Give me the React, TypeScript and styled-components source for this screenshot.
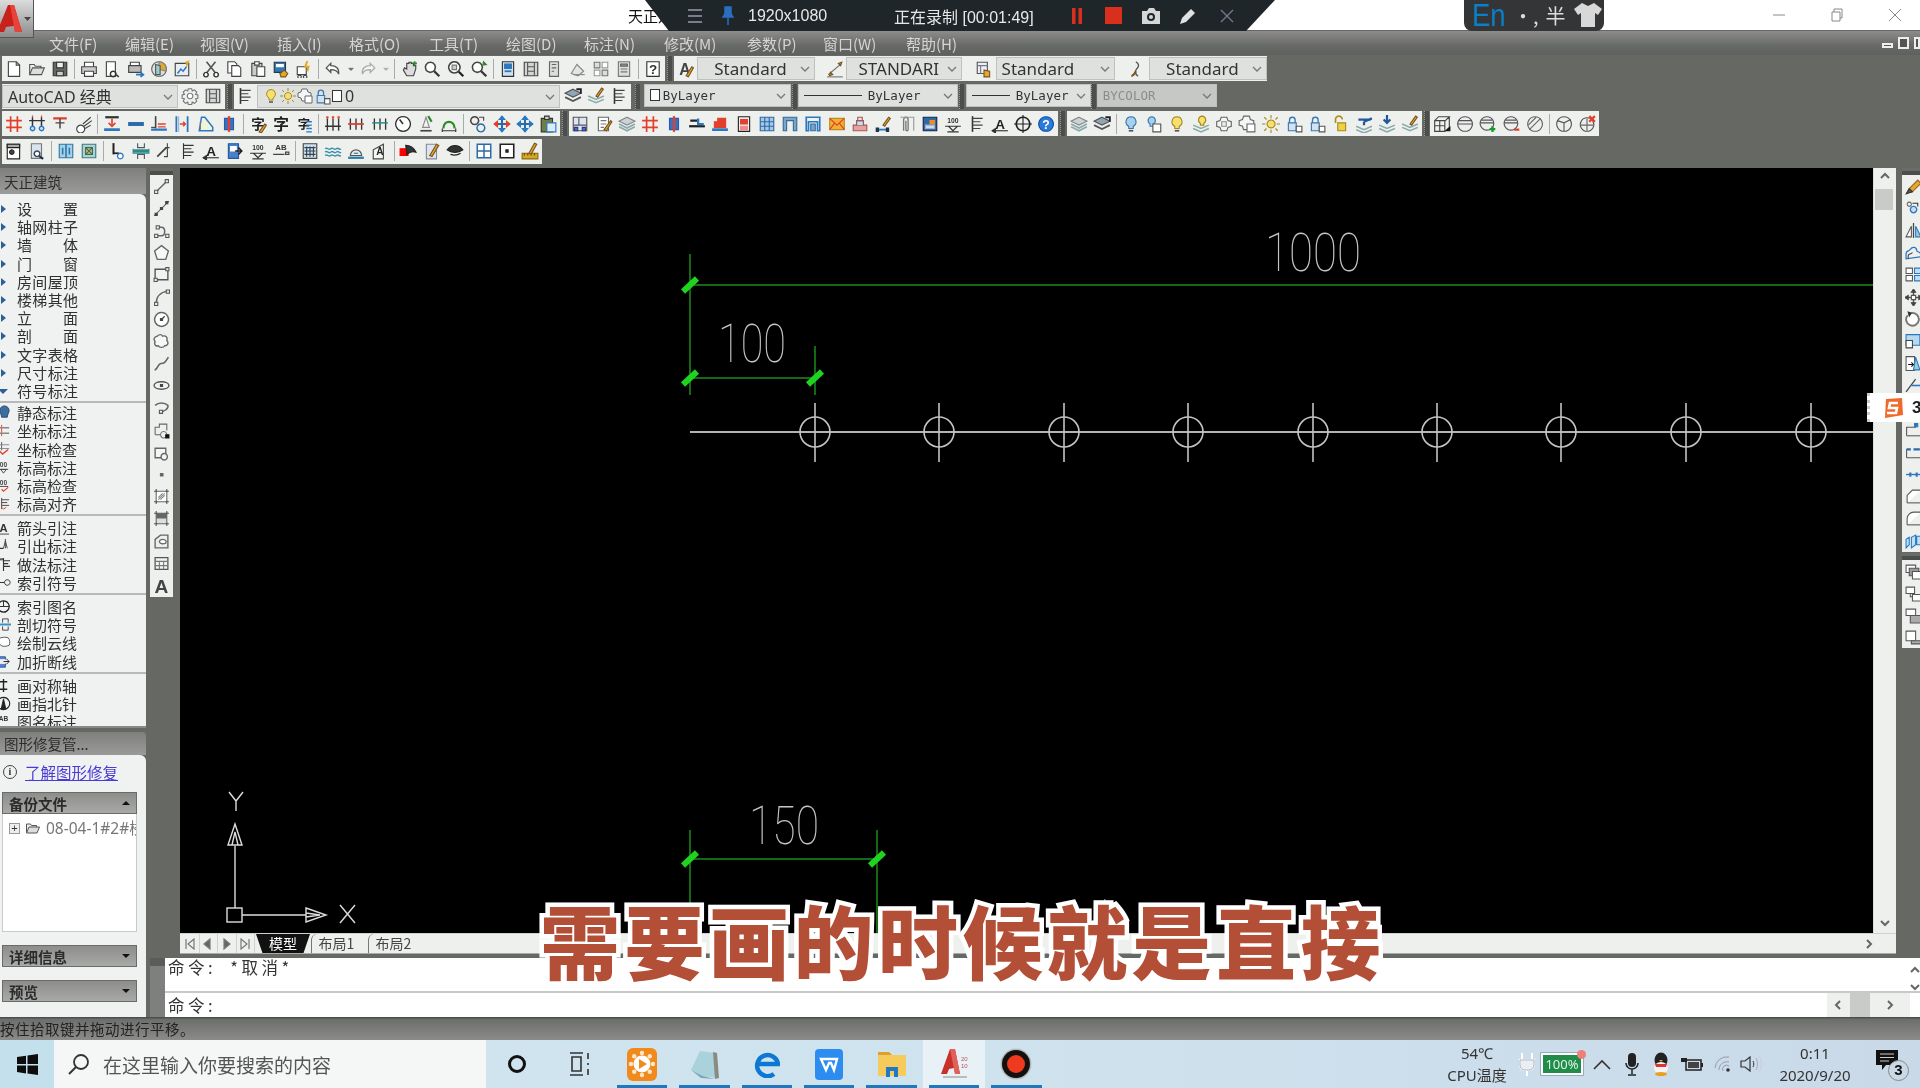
import React from "react";
import styled, { createGlobalStyle } from "styled-components";

const CJK = `"Noto Sans CJK SC", "Noto Sans", sans-serif`;

const Global = createGlobalStyle`
  html, body { margin: 0; padding: 0; background: #666864; }
  * { box-sizing: border-box; }
`;

/* ---------- icon data: [path, stroke, fill, width] or ["T:glyph", colour, size] ---------- */
type P = [string, string?, string?, number?];
const K = "#444";
const B = "#2b78c0";
const R = "#e2402c";
const Y = "#e0aa2c";
const GL: Record<string, P[]> = {
  new: [["M3 1.5h7l3 3v10H3z", K, "#fff"], ["M10 1.5v3h3", K]],
  open: [["M1.5 13V4h4l1 1.5h5V7", "#555", "#eee"], ["M1.5 13l2.5-6h10.5l-2.5 6z", "#555", "#ddd"]],
  save: [["M2 2h12v12H2z", "#333", "#666"], ["M5 2h6v5H5z", "#333", "#eee"], ["M5 10h6v4H5z", "#333", "#ccc"]],
  print: [["M4 6V2h8v4", K, "#fff"], ["M1.5 6h13v6h-13z", K, "#ccc"], ["M4 10h8v4.5H4z", K, "#fff"]],
  prev: [["M3 1.5h8v13H3z", K, "#fff"], ["M9 10a2.5 2.5 0 1 0 .1 0zM11 12.5l3 2.5", "#333", "none", 1.3]],
  plot: [["M3 5V2h8v3", K, "#fff"], ["M1.5 5h11v6h-11z", K, "#bbb"], ["M8 13h6M12 11l2.5 2-2.5 2", B, "none", 1.6]],
  pub: [["M8 1.5a6.5 6.5 0 1 0 .1 0z", "#666", "#ddd"], ["M8 1.5a6.5 6.5 0 0 1 6 8.5L8 8z", "#888", Y], ["M5 4l4 1v8H5z", "#555", "#9cc"]],
  sheet: [["M2 3h12v11H2z", K, "#e8eef4"], ["M4 12l3-4 2 2 3-4", B, "none", 1.3], ["M11 2l3-1-2 5", Y, Y]],
  cut: [["M4 1.5l8 10M12 1.5l-8 10", "#555", "none", 1.4], ["M3.5 11a2 2 0 1 0 .1 0zM12.5 11a2 2 0 1 0 .1 0z", "#333", "#fff", 1.3]],
  copy: [["M2.5 1.5h6l2 2v8h-8z", K, "#fff"], ["M6 5h6l2 2v7.5H6z", K, "#fff"]],
  paste: [["M2.5 3h9v11h-9z", K, "#ccc"], ["M5 1.5h4v3H5z", K, "#fff"], ["M7 6h7v8.5H7z", K, "#fff"]],
  match: [["M2 2h10v9H2z", "#333", B], ["M4 4h6v2H4z", "#fff", "#fff"], ["M7 12l4-3 3 3-2 3H8z", "#7a5320", Y]],
  blk: [["M2 6h8v7H2z", K, "#fff"], ["M4 13.5a1.5 1.5 0 1 0 .1 0zM9 13.5a1.5 1.5 0 1 0 .1 0z", K], ["M11 1l-2 5h3l-1 4", Y, "none", 1.8]],
  undo: [["M6 3L2 7l4 4V8.5c4 0 6 1 7 4 .5-5-2-7.5-7-7.5z", "#555", "#fff", 1.2]],
  redo: [["M10 3l4 4-4 4V8.5c-4 0-6 1-7 4-.5-5 2-7.5 7-7.5z", "#aaa", "#f5f5f5", 1.2]],
  drop: [["M5 7h6l-3 3z", "#666", "#666"]],
  dropl: [["M5 7h6l-3 3z", "#aaa", "#aaa"]],
  pan: [["M3 9l3 5h6l2-6V5h-2V3h-2V2H8v1H6v5L4 7z", K, "#ddd"], ["M11 3h4M13 1v4", "#2a8a2a", "none", 1.4]],
  zoom: [["M6.5 2a4.5 4.5 0 1 0 .1 0z", K, "#fff", 1.4], ["M10 10l4.5 4.5", "#333", "none", 2]],
  zoomw: [["M6.5 1.5a5 5 0 1 0 .1 0z", K, "#fff", 1.4], ["M4.5 4.5h4v4h-4z", "#777", "#ccc"], ["M10.5 10.5l4 4", "#222", "none", 2]],
  zoomp: [["M6.5 2a4.5 4.5 0 1 0 .1 0z", K, "#fff", 1.4], ["M10 10l4.5 4.5", "#333", "none", 2], ["M12 1.5l2.5 2.5-3 .5z", "#2a8a2a", "#2a8a2a"]],
  props: [["M3 1.5h10v13H3z", "#333", "#cfe0ee"], ["M5 3.5h6v4H5z", B, B], ["M5 10h6", B, "none", 1.6]],
  dc: [["M2 2h12v12H2z", "#444", "#d5d5d5"], ["M5 2v12M11 2v12M5 6h6M5 10h6", "#555"]],
  tool: [["M4 1.5h8v13H4z", "#666", "#ddd"], ["M6 4h4M6 7h4M6 10h2", "#666"]],
  sheetm: [["M2 12l5-8 6 6-5 4z", "#888", "#e5e5e5"], ["M4 13h10", "#888"]],
  mark: [["M2 2h5v5H2zM9 9h5v5H9z", "#777", "#ddd"], ["M9 2h5v5H9zM2 9h5v5H2z", "#999", "#fff"]],
  calc: [["M3 1.5h10v13H3z", "#777", "#ddd"], ["M5 3.5h6v2H5z", "#666", "#888"], ["M5 8h6M5 10.5h6", "#777"]],
  help: [["M2.5 1.5h11v13h-11z", "#333", "#fff"], ["T:?", "#333", "12"]],
  txt: [["T:A", "#444", "14"], ["M9 14l5-8 1.5 1-4.5 8z", "#7a5320", Y]],
  dim: [["M2 13L14 3", "#666"], ["M3 14l3-1-2-2zM14 2l-1 3-2-2z", "#7a5320", Y], ["M1 15h14", "#777"]],
  tbl: [["M2 2h9v10H2z", "#555", "#eef"], ["M2 5h9M5 5v7", "#777"], ["M8 9l5 1v5H8z", "#7a5320", Y]],
  mls: [["M7 1.5c3 2 3 4 1 6-2 2-2 5 1 7", "#555", "#eee", 1.2], ["M3 14c2 0 3-2 4-4", "#7a5320", "none", 2]],
  gear: [["M6.5 1.500h3l.5 2 2-1 2 2-1 2 2 .5v3l-2 .5 1 2-2 2-2-1-.5 2h-3l-.5-2-2 1-2-2 1-2-2-.5v-3l2-.5-1-2 2-2 2 1z", "#777", "#eee"], ["M8 5.500a2.500 2.500 0 1 0 .1 0z", "#777", "#fff"]],
  /* tianzheng row */
  hash: [["M5 1v14M11 1v14M1 5h14M1 11h14", R, "none", 1.5]],
  colg: [["M4 2v8M12 2v8M1 5h14", "#333", "none", 1.3], ["M4 2V.5M12 2V.5", R], ["M4 10a2 2 0 1 0 .1 0zM12 10a2 2 0 1 0 .1 0z", B, "#cde", 1.2]],
  tee: [["M2 3h12", R, "none", 2], ["M8 3v9M4 7h8", "#444", "none", 1.3]],
  tag: [["M5 9a3.5 3.5 0 1 0 .1 0z", K, "#fff"], ["M7 8l7-6M8 10l7-5M9 12l5-3", K]],
  dim1: [["M2 2h12", "#333", "none", 2], ["M8 3v7", R, "none", 1.5], ["M5 7l3 3 3-3", R, "none", 1.5], ["M1 13h14", B, "none", 2.4]],
  dash: [["M1 8h14", "#2a6aa8", "none", 3.5]],
  base: [["M5 1v11", "#444", "none", 1.4], ["M1 13h14", B, "none", 2], ["M7 8h7M7 10.5h7", R, "none", 1.2], ["M1 11h4", K]],
  bars: [["M3 1v14M13 1v14", B, "none", 1.6], ["M6 8h5M9 6l2 2-2 2", R, "none", 1.3], ["M5 1v14", "#9bc"]],
  arch: [["M2 14h12V11L7 2H4z", B, "#eef3da", 1.3], ["M3 13V6", "#777"]],
  cross: [["M4 3h8v10H4z", "#2a5aa8", "#3a70c0"], ["M8 1v14", R, "none", 2]],
  zi1: [["T:字", "#222", "12"], ["M9 15l5-7 1.5 1-4.5 7z", "#7a5320", Y]],
  zi: [["T:字", "#222", "14"]],
  zi3: [["T:字", "#222", "11"], ["M10 6h5M10 9h5M10 12h5M10 15h5", B, "none", 1.3]],
  dd1: [["M3 3v11M8 3v11M13 3v11M1 10h14", "#333", "none", 1.2], ["M2 2h2M7 2h2M12 2h2", R, "none", 2]],
  dd2: [["M3 3v10M8 3v10M13 3v10", "#333", "none", 1.2], ["M1 8h14", R, "none", 1.6]],
  dd3: [["M3 3v10M8 3v10M13 3v10", "#333", "none", 1.2], ["M1 7h14", "#2a8a8a", "none", 1.3]],
  clock: [["M8 1.5a6.5 6.5 0 1 0 .1 0z", "#333", "#fff", 1.2], ["M5 4l3 4", "#333", "none", 1.4]],
  chem: [["M3 14h10", "#444", "none", 1.5], ["M8 2l-3 9h6z", "#888", "#f2f2ee"], ["M10 1l3 5", "#2a8a2a", "none", 2]],
  arcg: [["M3 12c0-8 10-8 10 0", "#2a8a2a", "none", 2], ["M2 14h12M2 12v3M14 12v3", "#333"]],
  rings: [["M5 1.5a3.5 3.5 0 1 0 .1 0z", "#444", "none", 1.3], ["M10.5 8a3.5 3.5 0 1 0 .1 0z", "#2a6aa8", "none", 1.3], ["M9 2h4v3", "#444"]],
  arrows: [["M1 8h14M8 1v14", "#2a6aa8", "none", 1.8], ["M8 1L5.5 4h5zM8 15l-2.5-3h5z", B, B], ["M1 8l3-2.5v5zM15 8l-3-2.5v5z", R, R]],
  arrowsb: [["M1 8h14M8 1v14", "#2a6aa8", "none", 1.8], ["M8 1L5.5 4h5zM8 15l-2.5-3h5zM1 8l3-2.5v5zM15 8l-3-2.5v5z", B, B]],
  clip: [["M2 3h10v12H2z", "#333", "#6f7f3f"], ["M5 1h4v3H5z", "#333", "#ccc"], ["M7 7h8v8H7z", B, "#dcebf8"]],
  plan: [["M2 2h12v12H2z", "#555", "#dde6ee"], ["M2 9h12M7 2v7", "#556"], ["M3 11h3v3H3zM10 11h3v3h-3z", "#338", "#47b"]],
  note: [["M3 2h9v12H3z", "#666", "#fff"], ["M5 5h5M5 8h5M5 11h3", "#777"], ["M8 13l6-8 1 1-5 8z", "#7a5320", Y]],
  layers: [["M8 2l7 3.5L8 9 1 5.5z", "#888", "#c8d4da"], ["M1 8l7 3.5L15 8", "#8aa", "none", 1.5], ["M1 10.5L8 14l7-3.5", "#8aa", "none", 1.5]],
  step: [["M1 10h14", "#222", "none", 2], ["M9 3v5h5", B, "none", 2], ["M2 5h6", "#222", "none", 2]],
  stair: [["M3 11V6h3V3h7v8z", R, R], ["M1 13h14", B, "none", 2.4]],
  rdoc: [["M3 1.5h10v13H3z", "#222", "#eee"], ["M5 4h6v4H5z", R, R], ["M5 10h6v3H5z", "#e88", "#e88"]],
  cols: [["M2 2h12v12H2z", "#2a6aa8", "#a8c8e4"], ["M6 2v12M10 2v12M2 6h12M2 10h12", "#2a6aa8"]],
  door: [["M2 14V2h12v12h-3V5H5v9z", "#3a6a98", "#7ba6cc", 1]],
  door2: [["M2 14V2h12v12h-2V6H4v8z", B, "none", 1.5], ["M6 14V8h4v6z", "#3a6a98", "#7ba6cc"]],
  mail: [["M1.5 3h13v10h-13z", "#c08a20", "#f0b030"], ["M1.5 3L8 9l6.5-6M1.5 13L6 7M14.5 13L10 7", R, "none", 1]],
  stamp: [["M2 9h12v5H2z", "#a55", "#e8a0a0"], ["M5 9V5h6v4", "#666", "#cde"], ["M6 2h4v3H6z", "#a55", "#fdd"]],
  penb: [["M2 13h11", B, "none", 1.6], ["M2 11.5h2v3H2zM11 11.5h2v3h-2z", "#234", "#234"], ["M8 9l5-7 1.5 1-5 7z", "#7a5320", Y]],
  clipr: [["M5 14V4a2 2 0 0 1 4 0v9a1 1 0 0 1-2 0V5", "#777", "none", 1.2], ["M2 2h12v12", "#999"]],
  pnl: [["M2 2h12v12H2z", "#224", "#2a6aa8"], ["M8 5h4v3H8z", "#e89020", "#e89020"], ["M4 9h8v3H4z", "#aac", "#cde"]],
  lev: [["T:100", "#333", "6"], ["M1 10h14M8 14l-4-4h8zM3 15h10", "#333"]],
  lns: [["M4 1v14", "#333", "none", 1.4], ["M4 3h9M4 6h7M4 9h9M4 12h7", "#444"]],
  adim: [["T:A", "#222", "12"], ["M1 14h14", "#333"], ["M1 14l3-2v4z", "#333", "#333"]],
  tgt: [["M8 2a6 6 0 1 0 .1 0z", "#222", "none", 1.4], ["M8 0v16M0 8h16", "#222"]],
  q: [["M8 1.5a6.5 6.5 0 1 0 .1 0z", "#0a4ea8", "#2a7ad8"], ["T:?", "#fff", "11"]],
  lay2: [["M8 2l7 3.5L8 9 1 5.5z", "#555", "#8fa6b4"], ["M1 9l7 3.5L15 9", "#555", "none", 1.5], ["M11 2h4v4", "#222", "none", 1.6]],
  bulb: [["M8 1.5a4.5 4.5 0 0 0-2 8.5v2h4v-2a4.5 4.5 0 0 0-2-8.5z", "#3a78b0", "#a8d0ec"], ["M6 14h4", "#555", "none", 1.5]],
  bulbd: [["M6 1.5a3.5 3.5 0 0 0-1.5 6.5v2h3V8A3.5 3.5 0 0 0 6 1.5z", "#3a78b0", "#a8d0ec"], ["M7 8h7v7H7z", "#555", "#fff"]],
  bulby: [["M8 1.5a4.5 4.5 0 0 0-2 8.5v2h4v-2a4.5 4.5 0 0 0-2-8.5z", "#a88a20", "#f6e070"], ["M6 14h4", "#555", "none", 1.5]],
  bulbl: [["M9 1a3.5 3.5 0 0 0-1.5 6.5V9h3V7.500A3.5 3.5 0 0 0 9 1z", "#a88a20", "#f6e070"], ["M1 9l7 3 7-3M1 12l7 3 7-3", "#8aa", "none", 1.4]],
  snow: [["M5.500 2h5l1 3 3 1v4l-3 1-1 3h-5l-1-3-3-1V6l3-1z", "#666", "#f5f5f5"], ["M6 6h4v4H6z", "#888"]],
  snowd: [["M5 1h5l1 3 3 1v4l-3 1-1 3H5l-1-3-3-1V5l3-1z", "#666", "#f5f5f5"], ["M8 8h7v7H8z", "#666", "#fff"]],
  sun: [["M8 4.500a3.500 3.500 0 1 0 .1 0z", "#a88a20", "#f6e070"], ["M8 0v3M8 13v3M0 8h3M13 8h3M2 2l2 2M12 12l2 2M14 2l-2 2M2 14l2-2", "#a88a20"]],
  lockb: [["M4 7V4.500a2.500 2.500 0 0 1 5 0V7", "#3a78b0", "none", 1.2], ["M3 7h7v7H3z", "#3a78b0", "#cfe3f3"], ["M10 10h5v5h-5z", "#555", "#fff"]],
  locky: [["M4 7V4a3 3 0 0 1 6 0", "#b09020", "none", 1.5], ["M6 7h7v7H6z", "#a88a20", "#eed040"]],
  layl: [["M1 10l7 3 7-3M1 13l7 3 7-3", "#8aa", "none", 1.4], ["M8 6l7-3M8 6v3M3 4h11", "#23589a", "none", 2]],
  layd: [["M1 9l7 3 7-3M1 12l7 3 7-3", "#8aa", "none", 1.4], ["M8 0v6M5 4l3 3 3-3", "#23589a", "none", 2]],
  layp: [["M1 8l7 3 7-3M1 11l7 3 7-3", "#8aa", "none", 1.4], ["M8 8l5-7 1.500 1-5 7z", "#7a5320", Y]],
  box3: [["M1.500 5h9v9.500h-9zM1.500 5L5 1.500h9.500L11 5M14.500 1.500V11l-4 3.500", "#444", "#f2f2f2"], ["M6 5v9.500M1.500 9.500h9", "#444"], ["M12 14l3-3v3z", "#111", "#111"]],
  sph: [["M8 1.500a6.500 6.500 0 1 0 .1 0z", "#555", "#eee"], ["M1.500 8h13M2.500 5h11", "#555"]],
  sphp: [["M7 1.500a6 6 0 1 0 .1 0z", "#555", "#eee"], ["M1 7h12M2 4.500h10", "#555"], ["M12 10v5M9.500 12.500h5", "#139a2a", "none", 2]],
  sphm: [["M7 1.500a6 6 0 1 0 .1 0z", "#555", "#eee"], ["M1 7h12M2 4.500h10", "#555"], ["M10 13h4.500", R, "none", 2]],
  sphs: [["M8 1.500a6.500 6.500 0 1 0 .1 0z", "#666", "#eee"], ["M3 13L13 3M2 9l7-7", "#666"]],
  box4: [["M8 1.500a6.500 6.500 0 1 0 .1 0z", "#555", "#eee"], ["M2 5l6 2 6-3M8 7v7.500", "#555"]],
  boxx: [["M8 2.500a6 6 0 1 0 .1 0z", "#555", "#eee"], ["M2 9h12M8 3v11", "#666"], ["M10 1l5 5M15 1l-5 5", R, "none", 2]],
  /* fourth row */
  dor: [["M2 2h11v13H2z", "#222", "#fff"], ["M2 2h11v3H2z", "#222", "#aaa"], ["M6 7a2 2 0 1 0 .1 0z", "#222", "#444"]],
  mag: [["M3 1.500h9v13H3z", "#777", "#d8e4ee"], ["M8 8a2.500 2.500 0 1 0 .1 0z", "#345", "#fff", 1.3], ["M10 12.500l3.500 2.500", "#234", "none", 2]],
  book: [["M2 2h12v12H2z", "#2a7aa8", "#a8d0e8"], ["M8 2v12M5 5v6M11 5v6", "#2a7aa8", "none", 1.4]],
  pic: [["M2 2h12v12H2z", "#3a7a8a", "#aed2cc"], ["M5 5h6v6H5z", "#3a6a5a", "#d4c470"], ["M5 5l6 6M11 5l-6 6", "#3a6a5a"]],
  pipe: [["M4 1v10", "#222", "none", 1.8], ["M4 10h5", "#222", "none", 1.5], ["M10 10a2.500 2.500 0 1 0 .1 0z", "#2a78c0", "#fff", 1.2]],
  sec: [["M5 1v4h6V1M5 15v-4h6v4", "#555"], ["M1 8h14", "#2a8a8a", "none", 3], ["M1 6v4h14V6", "#2a8a8a"]],
  sta: [["M2 13l2-2 2-2 2-2 2-2", "#444", "none", 1.6], ["M11 5V1M9 5h4M11 5v8H8", "#444"]],
  al: [["M4 1v14M4 3h9M4 6h7M4 9h9M4 12h7", "#333"]],
  doc: [["M3 1.500h9v13H3z", "#23589a", "#4a80c8"], ["M5 4h5v4H5z", "#fff", "#fff"], ["M9 8h6M12 5l3 3-3 3", "#222", "none", 1.3]],
  abm: [["T:AB", "#333", "7"], ["M1 11h10M12 9h3v2h-3z", "#444"]],
  grd: [["M2 1.500h12v13H2z", "#444", "#cfe0ee"], ["M5 4v9M8 4v9M11 4v9M3 5h10M3 8h10M3 11h10", "#345"]],
  wave: [["M1 6c2-2 3 2 5 0s3 2 5 0 3 2 4 0", "#3a90a8", "none", 1.2], ["M1 9c2-2 3 2 5 0s3 2 5 0 3 2 4 0", "#3a90a8", "none", 1.2], ["M1 12c2-2 3 2 5 0s3 2 5 0 3 2 4 0", "#3a90a8", "none", 1.2]],
  dome: [["M3 12a5 5 0 0 1 10 0z", "#555", "#eee"], ["M1 14h14", "#2a7aa8", "none", 2], ["M6 10h4", "#2a7aa8"]],
  haus: [["M2 15V7l9-5v13z", "#444", "#f5f5f5"], ["T:A", "#222", "9"]],
  rdb: [["M1 6h7v6H1z", "#e00", "#f00"], ["M6 3c4 0 7 2 9 6-3-1-5-1-8 2z", "#222", "#333"]],
  pnn: [["M3 2h9v13H3z", "#889", "#dde6f0"], ["M6 12l6-10 2 1-6 10z", "#7a5320", Y]],
  eye: [["M1 7c4-5 10-5 14 0-4 3-10 3-14 0z", "#222", "#333"], ["M4 11c3 1 6 1 9-1", "#222"]],
  win4: [["M2 2h12v12H2z", "#2a6aa8", "#fff", 1.3], ["M8 2v12M2 8h12", "#2a6aa8", "none", 1.3]],
  sqd: [["M2 2h12v12H2z", "#222", "#fff", 1.4], ["M7 7h2v2H7z", "#222", "#222"]],
  rul: [["M1 10h14v5H1z", "#8a6a10", "#d4a820"], ["M3 10v2M6 10v2M9 10v2M12 10v2", "#6a4a00"], ["M7 10l5-9 2 1-5 9z", "#7a5320", Y]],
  /* vertical toolbars */
  line: [["M3 13L13 3", "#666", "none", 1.4], ["M1.500 11.500h3v3h-3zM11.500 1.500h3v3h-3z", "#555", "#eee"]],
  cline: [["M1 15L15 1", "#666"], ["M2 12.500h2v2H2zM7 7h2v2H7zM12 1.500h2v2h-2z", "#444", "#444"]],
  pline: [["M3 13h5c4 0 4-8 0-8H5", "#666", "none", 1.4], ["M1.500 11.500h3v3h-3zM3 3.500h3v3H3zM12 11.500h3v3h-3z", "#555", "#eee"]],
  poly: [["M8 1.500l6.500 5-2.500 8H4l-2.500-8z", "#666", "#f7f7f7", 1.3]],
  rect: [["M2 3h12v10H2z", "#555", "#f2f2f2", 1.3], ["M1 11.500h3v3H1zM12 1.500h3v3h-3z", "#555", "#eee"]],
  arc: [["M3 14C3 7 7 3 14 2", "#666", "none", 1.4], ["M1.500 12.500h3v3h-3zM12.500 1h3v3h-3z", "#555", "#eee"]],
  circ: [["M8 1.500a6.500 6.500 0 1 0 .1 0z", "#666", "#fff", 1.4], ["M8 8l3-3", "#444", "none", 1.2], ["M7 7h2v2H7z", "#444", "#444"]],
  cloud: [["M4 3c2-2 4-2 5 0 3-1 5 1 4 4 2 2 1 5-2 5-1 2-5 2-6 0-3 1-4-2-3-4-2-2-1-4 2-5z", "#666", "#f7f7f7", 1.3]],
  spl: [["M1.500 14c3 0 3-6 6-6s4-1 7-6", "#666", "none", 1.5]],
  ell: [["M8 4.500c4 0 7 1.500 7 3.500s-3 3.500-7 3.500S1 10 1 8s3-3.500 7-3.500z", "#555", "#f2f2f2", 1.3], ["M7 7h2v2H7z", "#444", "#444"]],
  ella: [["M2 6c3-3 9-3 12 0 1 3-4 6-6 6", "#666", "none", 1.4], ["M6 10.500h3v3H6z", "#555", "#eee"]],
  ins: [["M2 12V5h4V2h7v6", "#666"], ["M2 12h6", "#666"], ["M10 9a3 3 0 1 0 .1 0z", "#777", "#eee"], ["M12 12h3v3h-3z", "#111", "#111"]],
  blkv: [["M2 4h10v9H2z", "#666", "#f5f5f5", 1.3], ["M10.500 9a3 3 0 1 0 .1 0z", "#666", "#f5f5f5", 1.3]],
  pt: [["M7 7h2.400v2.400H7z", "#666", "#666"]],
  hat: [["M3 3h10v10H3z", "#666", "#fff"], ["M1 3h3M12 3h3M1 13h3M12 13h3M3 1v3M13 1v3M3 12v3M13 12v3", "#555"], ["M5 11l6-6M7 11l4-4M5 9l4-4", "#888"]],
  grad: [["M3 3h10v10H3z", "#666", "#ddd"], ["M1 3h3M12 3h3M1 13h3M12 13h3M3 1v3M13 1v3M3 12v3M13 12v3", "#555"], ["M3.500 3.500h9v4h-9z", "#666", "#666"]],
  reg: [["M2 14V6l5-4h7v12z", "#666", "#eee", 1.3], ["M9 6c3 0 4 2 3 3.500-2 1-5 1-6-1 0-1 1-2.500 3-2.500z", "#666", "#fff", 1.2]],
  tab: [["M2 2.500h12v11H2z", "#555", "#f2f2f2", 1.2], ["M2 6h12M2 10h12M6 6v7.500M10 6v7.500", "#777"]],
  bigA: [["T:A", "#444", "18"]],
  erase: [["M2 14l2-4 8-8 3 3-8 8z", "#a05c20", Y], ["M1 15l3-5 3 3z", "#333", "#555"]],
  cpo: [["M4 2a2 2 0 1 0 .1 0z", "#666", "#eee"], ["M8 6a3 3 0 1 0 .1 0z", B, "#cde", 1.3], ["M7 3h5v3", "#333"]],
  mir: [["M8 1v14", "#444", "none", 1.200], ["M6 4v10H1z", "#555", "#fff"], ["M10 4v10h5z", B, "#9cd"]],
  ofs: [["M1 14V9c0-3 3-2 4-4 2-3 6-2 6 1 0 2 4 1 4 4v2z", B, "none", 1.2], ["M3 14v-3c0-2 3-1 4-3", "#444"]],
  arr: [["M1 2h6v5H1zM1 9h6v5H1z", "#555", "#fff"], ["M9 2h6v5H9zM9 9h6v5H9z", B, "#bfe0f4"]],
  mov: [["M8 1v14M1 8h14", "#555", "none", 1.4], ["M8 0L6 3h4zM8 16l-2-3h4zM0 8l3-2v4zM16 8l-3-2v4z", "#444", "#444"], ["M6 6h4v4H6z", "#555", "#fff"]],
  rot: [["M6 2a6 6 0 1 1-3.500 2", "#777", "#fff", 1.8], ["M3 1l3 1-2 3z", "#333", "#333"]],
  scl: [["M1 1.500h13v10H1z", B, "#b8d8f0"], ["M1 7h6v7H1z", "#444", "#fff"]],
  str: [["M1 1.500h8v13H1z", "#555", "#fff"], ["M3 9h5M6 7l2 2-2 2", "#111"], ["M10 2l4 12h-6z", B, "#9cd"]],
  trm: [["M1 14L10 2", "#444", "none", 1.200], ["M6 8h9", B, "none", 1.500]],
  ext: [["M2 1v14", "#444"], ["M4 8h10", B, "none", 1.500]],
  brk: [["M1.500 13V5h9", "#555"], ["M1.500 13h14", "#555"], ["M9 1.500h3v3H9z", B, B]],
  brk2: [["M1.500 13V5M1.500 13h14", "#555"], ["M1.500 5h4M8 5h6", "#2a6aa8", "none", 2]],
  brk3: [["M1 8h14", B, "none", 1.300], ["M5 6v4M11 6v4", B, "none", 2]],
  chm: [["M2 14V7l5-5h8", "#555", "#fff"], ["M2 14h13", "#555"]],
  fil: [["M2 14V8c0-3 3-6 6-6h7", "#555", "#fff"], ["M2 14h13", "#555"]],
  exp: [["M1 14V6l3-2v7zM6 14V4l4-2v9zM11 11V3h4v8z", B, "#bfe0f4"]],
  ord1: [["M1 2h9v7H1z", "#555", "#fff"], ["M4 5h9v7H4z", "#555", "#999"], ["M7 8h9v7H7z", "#555", "#fff"]],
  ord2: [["M1 2h8v6H1z", "#555", "#fff"], ["M7 9h9v6H7z", "#555", "#fff"], ["M5 8v3h2", "#555"]],
  ord3: [["M1 2h9v6H1z", "#555", "#fff"], ["M5 8h11v7H5z", "#555", "#aaa"]],
  ord4: [["M1 2h9v9H1z", "#555", "#fff"], ["M6 11h10v3H6z", "#555", "#aaa"]],
  /* small, left-edge menu icons */
  mbulb: [["M9 1a5 5 0 0 0-5 5c0 2 1.500 3 2 7h6c.5-4 2-5 2-7a5 5 0 0 0-5-5z", "#234a78", "#3e6e9e"]],
  mcoor: [["M6 2v12", R], ["M2 5h12M2 11h12", "#888", "none", 1.500]],
  mchk: [["M6 1v9", "#555"], ["M2 4h12M2 8h12", "#888"], ["M4 11l3 3 6-5", R, "none", 1.500]],
  mlv: [["T:00", "#444", "7"], ["M3 10h10M8 14l-3-4h6z", "#444"]],
  mlvc: [["T:00", "#444", "7"], ["M3 9h10", "#444"], ["M6 12l2 2 5-4", R, "none", 1.300]],
  mal: [["M6 2v12", "#444"], ["M6 4h8M6 7h6M6 10h8", "#444"], ["M6 12l2 2 3-2", R]],
  mA: [["T:A", "#333", "12"], ["M2 15h12", "#444"]],
  mld: [["M2 11h6", "#333", "none", 1.300], ["M10 3v8M8 11l2-8 2 8", "#444"], ["M10 1v2", "#333"]],
  mwk: [["M8 1v14M8 4h7M8 7h5M8 10h7", "#333", "none", 1.200], ["M8 2H2v1h6", "#333"]],
  mref: [["M2 8h8", "#333", "none", 1.300], ["M12 5a3 3 0 1 0 .1 0z", "#333", "#eee"]],
  mnam: [["M8 2a6 6 0 1 0 .1 0z", "#222", "none", 1.300], ["M2 8h12M8 2v6", "#222"]],
  mcut: [["M7 2v4M13 2v4M7 10v4M13 10v4M7 2h6M7 14h6", "#444"], ["M1 8h15", "#3a90c8", "none", 2]],
  mclo: [["M3 4c3-2 7-2 10-1 2 2 2 6 1 8-3 1-6 2-9 0-2-2-3-5-2-7z", "#555", "#fff"]],
  mbrk: [["M1 3h9v11H1z", "#23589a", "#5a84d8"], ["M4 6h6v4H4z", "#eee", "#eee"], ["M8 8h6M11 5l3 3-3 3", "#222"]],
  maxs: [["M8 1v14M4 4h8M4 12h8", "#222", "none", 1.500]],
  mnor: [["M8 1.500a6.500 6.500 0 1 0 .1 0z", "#222", "none", 1.200], ["M8 3l-2.500 11h5z", "#222", "#222"]],
  mtag: [["T:AB", "#333", "7"]],
};

const Svg = styled.svg`
  display: block;
  flex: none;
`;

const Glyph: React.FC<{ n: string; size?: number }> = ({ n, size = 18 }) => (
  <Svg width={size} height={size} viewBox="0 0 16 16">
    {(GL[n] || []).map((p, i) =>
      p[0].startsWith("T:") ? (
        <text
          key={i}
          x="8"
          y={p[2] && +p[2] < 8 ? 7 : 8 + +(p[2] || 12) * 0.38}
          textAnchor="middle"
          fontFamily={`"Liberation Sans", "Noto Sans CJK SC", sans-serif`}
          fontWeight="700"
          fontSize={p[2]}
          fill={p[1]}
        >
          {p[0].slice(2)}
        </text>
      ) : (
        <path key={i} d={p[0]} stroke={p[1] || "none"} fill={p[2] || "none"} strokeWidth={p[3] || 1} />
      ),
    )}
  </Svg>
);

/* ---------- page ---------- */
const Page = styled.div`
  position: relative;
  width: 1920px;
  height: 1088px;
  overflow: hidden;
  display: flex;
  flex-direction: column;
  background: #666864;
  font-family: ${CJK};
  filter: blur(0.45px);
`;

/* title bar */
const TitleBar = styled.header`
  height: 31px;
  flex: none;
  background: #fff;
  display: flex;
  align-items: center;
  border-bottom: 1px solid #666;
`;
const TitleText = styled.span`
  margin-left: 628px;
  width: 60px;
  flex: none;
  font-size: 15px;
  white-space: nowrap;
  color: #111;
`;
const ImeBar = styled.div`
  margin-left: 776px;
  width: 140px;
  height: 31px;
  flex: none;
  background: #333536;
  border-radius: 0 0 8px 8px;
  display: flex;
  align-items: center;
  gap: 7px;
  padding-left: 8px;
  color: #ddd;
  font-size: 20px;
`;
const ImeEn = styled.span`
  font-family: "Liberation Sans", sans-serif;
  font-size: 32px;
  line-height: 31px;
  color: #0b7fc8;
  transform: scaleX(0.86);
  transform-origin: left;
  width: 34px;
  flex: none;
`;
const WinButtons = styled.div`
  margin-left: 167px;
  display: flex;
  gap: 42px;
  align-items: center;
`;
const AppButton = styled.div`
  position: absolute;
  left: 0;
  top: 0;
  width: 34px;
  height: 38px;
  background: linear-gradient(#dcdcdc, #8c8c8c);
  border: 1px solid #555;
  border-left: 0;
  border-top: 0;
`;
const RecBar = styled.div`
  position: absolute;
  left: 645px;
  top: 0;
  width: 630px;
  height: 31px;
  background: #1f262a;
  clip-path: polygon(0 0, 100% 0, 95.400% 100%, 3.800% 100%);
  color: #e6e8e8;
  font-family: "Liberation Sans", ${CJK};
  font-size: 16px;
  display: flex;
  align-items: center;
`;
const RecSize = styled.span`
  margin-left: 14px;
  width: 146px;
  flex: none;
`;
const RecTime = styled.span`
  width: 165px;
  flex: none;
  font-size: 16px;
  white-space: nowrap;
`;
const RecTool = styled.span<{ $w: number }>`
  width: ${(p) => p.$w}px;
  display: flex;
  justify-content: center;
  flex: none;
`;
const RecLead = styled.span`
  width: 42px;
  flex: none;
`;
const RecPin = styled.span`
  margin-left: 19px;
  flex: none;
`;

/* menu */
const MenuBar = styled.nav`
  height: 24px;
  flex: none;
  display: flex;
  align-items: center;
  padding-left: 49px;
  position: relative;
  background: linear-gradient(#8d8e8b, #686a67 60%, #5e605d);
  color: #d5d6d4;
  font-size: 15px;
`;
const MenuItem = styled.span<{ $w: number }>`
  width: ${(p) => p.$w}px;
  flex: none;
  white-space: nowrap;
`;
const MdiButtons = styled.div`
  position: absolute;
  right: 0;
  top: 6px;
  display: flex;
  gap: 5px;
`;
const MdiBtn = styled.span<{ $kind?: "min" | "cut" }>`
  display: block;
  width: ${(p) => (p.$kind === "cut" ? 6 : 11)}px;
  height: ${(p) => (p.$kind === "min" ? 5 : 12)}px;
  margin-top: ${(p) => (p.$kind === "min" ? 6 : 0)}px;
  border: 2px solid #eee;
  background: #555;
`;

/* toolbars */
const ToolArea = styled.section`
  height: 113px;
  flex: none;
  padding-top: 1px;
  display: flex;
  flex-direction: column;
  gap: 2.500px;
`;
const ToolRow = styled.div`
  height: 25px;
  flex: none;
  display: flex;
  align-items: stretch;
  padding-left: 2px;
`;
const Bar = styled.div`
  display: flex;
  align-items: center;
  background: #eef0ee;
  flex: none;
`;
const Grip = styled.span<{ $w?: number }>`
  width: ${(p) => p.$w ?? 9}px;
  flex: none;
  display: flex;
  justify-content: center;
  &::after {
    content: "";
    width: 4px;
    height: 100%;
    background: #4c4e4c;
    border-left: 1px dotted #999;
  }
`;
const Btn = styled.span<{ $ml?: number }>`
  width: 23.300px;
  height: 25px;
  margin-left: ${(p) => p.$ml ?? 0}px;
  flex: none;
  display: flex;
  align-items: center;
  justify-content: center;
`;
const NarrowBtn = styled(Btn)`
  width: 12px;
`;
const Sep = styled.span`
  width: 1px;
  height: 20px;
  margin: 0 2.250px;
  background: #a9aba9;
  flex: none;
`;
const Combo = styled.div<{ $w: number; $dim?: boolean; $center?: boolean; $serif?: boolean; $big?: boolean }>`
  width: ${(p) => p.$w}px;
  height: 23px;
  flex: none;
  display: flex;
  align-items: center;
  position: relative;
  padding: 0 16px 0 5px;
  white-space: nowrap;
  overflow: hidden;
  background: ${(p) => (p.$dim ? "#c6c8c6" : "#dfe1df")};
  border: 1px solid #bfc1bf;
  color: ${(p) => (p.$dim ? "#8b8d8b" : "#333")};
  font-family: ${(p) => (p.$serif ? `"DejaVu Sans Mono", "Liberation Mono", monospace` : `"Noto Sans", ${CJK}`)};
  font-size: ${(p) => (p.$serif ? 12.500 : p.$big ? 17 : 16)}px;
  justify-content: ${(p) => (p.$center ? "center" : "flex-start")};
  gap: 1px;
`;
const Chev = styled.svg`
  position: absolute;
  right: 4px;
  top: 8px;
`;
const Chevron: React.FC = () => (
  <Chev width="10" height="7" viewBox="0 0 10 7">
    <path d="M1 1l4 4 4-4" stroke="#777" fill="none" strokeWidth="1.300" />
  </Chev>
);
const Swatch = styled.span`
  width: 10px;
  height: 12px;
  border: 1px solid #333;
  background: #fff;
  flex: none;
  margin-right: 2px;
`;
const LineSample = styled.span<{ $w: number }>`
  width: ${(p) => p.$w}px;
  height: 1px;
  background: #333;
  flex: none;
  margin-right: 5px;
`;

type Item = string; // glyph key, "|" separator, "~x" narrow button

const Strip: React.FC<{ items: Item[] }> = ({ items }) => (
  <>
    {items.map((it, i) =>
      it === "|" ? (
        <Sep key={i} />
      ) : it.startsWith("~") ? (
        <NarrowBtn key={i}>
          <Glyph n={it.slice(1)} size={12} />
        </NarrowBtn>
      ) : (
        <Btn key={i}>
          <Glyph n={it} />
        </Btn>
      ),
    )}
  </>
);

const MENU: [string, number][] = [
  ["文件(F)", 76], ["编辑(E)", 75], ["视图(V)", 77], ["插入(I)", 72], ["格式(O)", 80], ["工具(T)", 77],
  ["绘图(D)", 78], ["标注(N)", 80], ["修改(M)", 83], ["参数(P)", 76], ["窗口(W)", 83], ["帮助(H)", 76],
];
const ROW1 = "new open save | print prev plot pub sheet | cut copy paste match blk | undo ~drop redo ~dropl | pan zoom zoomw zoomp | props dc tool sheetm mark calc | help".split(" ");
const ROW3A = "hash colg tee tag | dim1 dash base bars arch cross | zi1 zi zi3 | dd1 dd2 dd3 clock chem arcg | rings arrows arrowsb clip".split(" ");
const ROW3B = "plan note layers hash cross step stair rdoc cols door door2 mail stamp penb clipr pnl lev lns adim tgt q".split(" ");
const ROW3C = "layers lay2 | bulb bulbd bulby bulbl snow snowd sun lockb lockb locky layl layd layp".split(" ");
const ROW3D = "box3 sph sphp sphm sphs | box4 boxx".split(" ");
const ROW4 = "dor mag | book pic | pipe sec sta al adim doc lev abm | grd wave dome haus | rdb pnn eye | win4 sqd rul".split(" ");

/* body */
const Body = styled.main`
  height: 849px;
  flex: none;
  display: flex;
`;
const LeftDock = styled.aside`
  width: 146px;
  flex: none;
  display: flex;
  flex-direction: column;
`;
const DockHead = styled.div`
  height: 26px;
  flex: none;
  padding-left: 4px;
  display: flex;
  align-items: center;
  background: linear-gradient(#7f807e, #9b9c9a);
  color: #2c2e2e;
  font-size: 14.500px;
`;
const MenuBox = styled.div`
  height: 534px;
  flex: none;
  overflow: hidden;
  background: #f0f2f1;
  border-radius: 0 6px 0 0;
  padding-top: 6px;
  border-bottom: 2px solid #888;
`;
const Row = styled.div`
  height: 18.200px;
  display: flex;
  align-items: center;
  padding-left: 17px;
  position: relative;
  color: #2f3133;
  font-size: 15px;
  line-height: 18px;
`;
const RowLabel = styled.span`
  width: 61px;
  white-space: nowrap;
  text-align-last: justify;
`;
const Tri = styled.span<{ $open?: boolean }>`
  position: absolute;
  left: 1px;
  top: 5px;
  width: 0;
  height: 0;
  ${(p) =>
    p.$open
      ? `border-left:5px solid transparent;border-right:5px solid transparent;border-top:5px solid #2c5f95;left:-2px;top:7px;`
      : `border-top:4px solid transparent;border-bottom:4px solid transparent;border-left:5px solid #2c5f95;`}
`;
const RowIcon = styled.span`
  position: absolute;
  left: -4px;
  top: 1px;
`;
const GroupLine = styled.div<{ $gap: number }>`
  height: 2px;
  background: #b8bab8;
  margin: 1px 0 ${(p) => p.$gap}px;
`;
const RepairHead = styled.div`
  height: 23px;
  flex: none;
  margin-top: 4px;
  padding-left: 4px;
  display: flex;
  align-items: center;
  background: linear-gradient(#7f807e, #9a9b99);
  border-radius: 0 4px 0 0;
  color: #2c2e2e;
  font-size: 14.500px;
`;
const RepairBody = styled.div`
  flex: 1;
  background: #f0f2f1;
  border-radius: 0 6px 0 0;
  padding: 0 8px 0 2px;
`;
const InfoLine = styled.div`
  height: 34px;
  margin-bottom: 3px;
  display: flex;
  align-items: center;
  gap: 8px;
  padding-left: 1px;
`;
const InfoIcon = styled.span`
  width: 14px;
  height: 14px;
  border: 1.500px solid #444;
  border-radius: 50%;
  font: 700 10px/11px "Liberation Serif", serif;
  color: #333;
  text-align: center;
  flex: none;
`;
const RepairLink = styled.a`
  color: #4a3ad6;
  text-decoration: underline;
  font-size: 15.500px;
`;
const SectionHead = styled.div<{ $mt?: number }>`
  height: 22px;
  width: 135px;
  margin-top: ${(p) => p.$mt ?? 0}px;
  border: 1px solid #6a6c6a;
  background: linear-gradient(#8d8e8c, #a9aaa8);
  display: flex;
  align-items: center;
  justify-content: space-between;
  padding: 0 6px;
  color: #2b2b2b;
  font-size: 14.500px;
  font-weight: 700;
`;
const TreeBox = styled.div`
  width: 135px;
  height: 118px;
  background: #fff;
  border: 1px solid #c9cbc9;
  border-top: 0;
  padding: 6px 0 0 6px;
  display: flex;
  align-items: flex-start;
  gap: 5px;
  color: #777;
  font-family: "Noto Sans", ${CJK};
  font-size: 15.500px;
  line-height: 17px;
  overflow: hidden;
  white-space: nowrap;
`;
const PlusBox = styled.span`
  width: 11px;
  height: 11px;
  margin-top: 3px;
  border: 1px solid #999;
  background: #eee;
  flex: none;
  font: 11px/9px "Liberation Sans", sans-serif;
  text-align: center;
  color: #333;
`;
const DownMark = styled.span<{ $up?: boolean }>`
  width: 0;
  height: 0;
  border-left: 4px solid transparent;
  border-right: 4px solid transparent;
  ${(p) => (p.$up ? "border-bottom:4px solid #111;" : "border-top:4px solid #111;")}
`;

const Work = styled.div`
  flex: 1;
  min-width: 0;
  display: flex;
  flex-direction: column;
`;
const DrawRow = styled.div`
  height: 786px;
  flex: none;
  display: flex;
`;
const DrawGutter = styled.div`
  width: 34px;
  flex: none;
  padding-left: 4px;
`;
const VBar = styled.div<{ $w: number; $mt?: number }>`
  width: ${(p) => p.$w}px;
  margin-top: ${(p) => p.$mt ?? 0}px;
  background: #eef0ee;
  overflow: hidden;
  display: flex;
  flex-direction: column;
`;
const VGrip = styled.div`
  height: 7px;
  background: #4c4e4c;
  border-top: 3px solid #6a6c6a;
  flex: none;
`;
const VBtn = styled.span<{ $h: number }>`
  height: ${(p) => p.$h}px;
  width: 23px;
  flex: none;
  display: flex;
  align-items: center;
  justify-content: center;
`;
const CanvasFrame = styled.div`
  width: 1716px;
  flex: none;
  display: grid;
  grid-template-columns: 1693px 23px;
  grid-template-rows: 765px 21px;
  background: #eef0ee;
`;
const CanvasSvg = styled(Svg)`
  background: #000;
`;
const VScroll = styled.div`
  border-left: 1px solid #ddd;
  display: flex;
  flex-direction: column;
  align-items: center;
  justify-content: space-between;
  padding: 4px 0;
  position: relative;
`;
const VThumb = styled.span`
  position: absolute;
  left: 1px;
  right: 3px;
  top: 21px;
  height: 21px;
  background: #c9cbc9;
`;
const TabRow = styled.div`
  grid-column: 1 / span 2;
  display: flex;
  align-items: stretch;
  padding-left: 1px;
  border-top: 1px solid #cfd1cf;
  border-bottom: 1px solid #aaa;
  font-size: 14px;
  color: #444;
`;
const NavBtn = styled.span`
  width: 18.500px;
  flex: none;
  display: flex;
  align-items: center;
  justify-content: center;
  border-right: 1px solid #d0d2d0;
`;
const Tab = styled.span<{ $on?: boolean; $w: number; $ml?: number }>`
  width: ${(p) => p.$w}px;
  margin-left: ${(p) => p.$ml ?? 0}px;
  flex: none;
  text-align: center;
  line-height: 18px;
  ${(p) =>
    p.$on
      ? `background:#111;color:#fff;clip-path:polygon(0 0,100% 0,88% 100%,12% 100%);`
      : `border-left:1px solid #777;border-radius:6px 0 0 0;`}
`;
const TabEnd = styled.span`
  margin-left: auto;
  width: 32px;
  display: flex;
  align-items: center;
`;
const RightRail = styled.div`
  margin-left: 6px;
  width: 18px;
  flex: none;
`;
const CmdRow = styled.div`
  margin-top: 4px;
  height: 59px;
  flex: none;
  display: flex;
  padding-left: 4px;
`;
const CmdGrip = styled.div`
  width: 15px;
  flex: none;
  background: linear-gradient(#5a5c5a 0 8px, #7e807e 8px);
`;
const CmdBody = styled.div`
  flex: 1;
  min-width: 0;
  background: #fff;
  display: flex;
  flex-direction: column;
  color: #333;
  font-size: 16.500px;
`;
const CmdHistory = styled.div`
  height: 35px;
  flex: none;
  padding-left: 3px;
  line-height: 19px;
  border-bottom: 2px solid #c8cac8;
  letter-spacing: 3.500px;
  word-spacing: 7px;
  display: flex;
  justify-content: space-between;
`;
const CmdVScroll = styled.span`
  width: 13px;
  display: flex;
  flex-direction: column;
  align-items: flex-end;
  gap: 7px;
  padding-top: 8px;
  flex: none;
`;
const CmdInput = styled.div`
  flex: 1;
  display: flex;
  align-items: center;
  justify-content: space-between;
  padding-left: 3px;
  letter-spacing: 3.500px;
`;
const HScroll = styled.div`
  width: 83px;
  height: 100%;
  margin-right: 10px;
  background: #eef0ee;
  display: grid;
  grid-template-columns: 23px 20px 1fr;
  align-items: center;
  justify-items: center;
`;
const HThumb = styled.span`
  width: 20px;
  height: 100%;
  background: #c9cbc9;
`;
const StatusBar = styled.div`
  height: 23px;
  flex: none;
  display: flex;
  align-items: center;
  background: linear-gradient(#4d4f4d 0, #4d4f4d 1px, #6c6e6c 2px, #8b8c8a);
  color: #222;
  font-size: 14.500px;
  letter-spacing: 0.500px;
`;
const Taskbar = styled.footer`
  height: 48px;
  flex: none;
  display: flex;
  align-items: center;
  background: linear-gradient(90deg, #cfe5ef, #cfe3ee 50%, #c9d9e8);
`;
const StartBtn = styled.div`
  width: 54px;
  height: 100%;
  flex: none;
  background: #c3e0ec;
  display: flex;
  align-items: center;
  justify-content: center;
`;
const SearchBox = styled.div`
  width: 432px;
  height: 100%;
  flex: none;
  background: #f5f6f6;
  display: flex;
  align-items: center;
  gap: 13px;
  padding-left: 14px;
  color: #555;
  font-size: 19px;
`;
const TaskBtn = styled.div<{ $on?: boolean; $line?: boolean }>`
  width: 62.400px;
  height: 100%;
  flex: none;
  display: flex;
  align-items: center;
  justify-content: center;
  position: relative;
  ${(p) => (p.$on ? "background:#e8f1f5;" : "")}
  ${(p) =>
    p.$line
      ? `&::after{content:"";position:absolute;left:6px;right:6px;bottom:0;height:3px;background:#1f78bd;}`
      : ""}
`;
const Tray = styled.div`
  margin-left: auto;
  width: 483px;
  height: 100%;
  display: flex;
  align-items: center;
  color: #333;
  flex: none;
`;
const TrayItem = styled.div<{ $w: number }>`
  width: ${(p) => p.$w}px;
  height: 100%;
  flex: none;
  display: flex;
  flex-direction: column;
  align-items: center;
  justify-content: center;
  position: relative;
`;
const TrayText = styled.div`
  font-size: 15px;
  line-height: 22px;
  text-align: center;
  white-space: nowrap;
  font-family: "Noto Sans", ${CJK};
`;
const Battery = styled.div`
  width: 42px;
  height: 22px;
  border: 2px solid #fff;
  background: #1f8c4a;
  color: #dff3e4;
  font: 13px/18px "Noto Sans", sans-serif;
  text-align: center;
  position: relative;
  box-shadow: 0 0 0 1px #9ab;
`;
const RedDot = styled.span`
  position: absolute;
  right: -5px;
  top: -5px;
  width: 9px;
  height: 9px;
  border-radius: 50%;
  background: #ef7f78;
`;
const NotifyIcon = styled(Svg)`
  margin-top: -8px;
`;
const NotifyBadge = styled.span`
  position: absolute;
  left: 21px;
  top: 20px;
  width: 21px;
  height: 21px;
  border-radius: 50%;
  border: 1.500px solid #888;
  background: #cbd9e6;
  font: 700 15px/18px "Liberation Sans", sans-serif;
  color: #111;
  text-align: center;
`;
const SogouBox = styled.div`
  position: absolute;
  left: 1867px;
  top: 393px;
  width: 53px;
  height: 29px;
  background: #fff;
  border-left: 3px dotted #ccc;
  display: flex;
  align-items: center;
  gap: 7px;
  padding-left: 11px;
  font: 700 17px "Liberation Sans", sans-serif;
  color: #222;
`;
const Caption = styled.div`
  position: absolute;
  left: 540px;
  top: 884px;
  font-family: ${CJK};
  font-weight: 900;
  font-size: 80px;
  line-height: 108px;
  letter-spacing: 4.500px;
  white-space: nowrap;
  color: #b24f36;
  -webkit-text-stroke: 9px #fff;
  paint-order: stroke fill;
`;

const Cad: React.FC = () => {
  const G = "#1d8a1d";
  const tick = (x: number, y: number) => (
    <line key={`${x}-${y}`} x1={x - 7} y1={y + 6.500} x2={x + 7} y2={y - 6.500} stroke="#1ed41e" strokeWidth="6" />
  );
  const xs = [815, 939, 1064, 1188, 1313, 1437, 1561, 1686, 1811];
  const digits = {
    fontFamily: `Roboto, "Liberation Sans", sans-serif`,
    fontWeight: 100,
    fill: "#c4c4c4",
    lengthAdjust: "spacingAndGlyphs" as const,
  };
  return (
    <CanvasSvg width="1693" height="765" viewBox="180 168 1693 765">
      <g stroke={G} strokeWidth="1.500" fill="none">
        <path d="M690 254V395M690 285H1873M690 378H815M815 346V395" />
        <path d="M690 830V933M877 830V933M690 859H877" />
      </g>
      {tick(690, 285)}
      {tick(690, 378)}
      {tick(815, 378)}
      {tick(690, 859)}
      {tick(877, 859)}
      <path d="M690 432H1873" stroke="#b4b4b4" strokeWidth="2" />
      {xs.map((x) => (
        <g key={x} stroke="#c4c4c4" fill="none" strokeWidth="1.600">
          <circle cx={x} cy="432" r="15" />
          <path d={`M${x} 403V462`} />
        </g>
      ))}
      <text x="1265" y="271" fontSize="54" textLength="96" {...digits}>1000</text>
      <text x="718" y="362" fontSize="54" textLength="68" {...digits}>100</text>
      <text x="749" y="844" fontSize="54" textLength="70" {...digits}>150</text>
      <g stroke="#ddd" fill="none" strokeWidth="1.400">
        <rect x="227" y="908" width="15" height="14" />
        <path d="M235 908V846M242 915H306" />
        <path d="M235 824l-7 21h14zM235 832l-3 13M235 832l3 13" />
        <path d="M306 908l20 7-20 7zM306 913l14 2-14 2" />
        <path d="M229 792l7 9 7-9M236 801V811" />
        <path d="M340 905l15 18M355 905l-15 18" />
      </g>
    </CanvasSvg>
  );
};

const DOCK: { icon?: string; tri?: boolean; open?: boolean; t: string; fit?: boolean }[][] = [
  [
    { tri: true, t: "设 置", fit: true },
    { tri: true, t: "轴网柱子", fit: true },
    { tri: true, t: "墙 体", fit: true },
    { tri: true, t: "门 窗", fit: true },
    { tri: true, t: "房间屋顶", fit: true },
    { tri: true, t: "楼梯其他", fit: true },
    { tri: true, t: "立 面", fit: true },
    { tri: true, t: "剖 面", fit: true },
    { tri: true, t: "文字表格", fit: true },
    { tri: true, t: "尺寸标注", fit: true },
    { tri: true, open: true, t: "符号标注", fit: true },
  ],
  [
    { icon: "mbulb", t: "静态标注" },
    { icon: "mcoor", t: "坐标标注" },
    { icon: "mchk", t: "坐标检查" },
    { icon: "mlv", t: "标高标注" },
    { icon: "mlvc", t: "标高检查" },
    { icon: "mal", t: "标高对齐" },
  ],
  [
    { icon: "mA", t: "箭头引注" },
    { icon: "mld", t: "引出标注" },
    { icon: "mwk", t: "做法标注" },
    { icon: "mref", t: "索引符号" },
  ],
  [
    { icon: "mnam", t: "索引图名" },
    { icon: "mcut", t: "剖切符号" },
    { icon: "mclo", t: "绘制云线" },
    { icon: "mbrk", t: "加折断线" },
  ],
  [
    { icon: "maxs", t: "画对称轴" },
    { icon: "mnor", t: "画指北针" },
    { icon: "mtag", t: "图名标注" },
  ],
];

const VLEFT = "line cline pline poly rect arc circ cloud spl ell ella ins blkv pt hat grad reg tab bigA".split(" ");
const VRIGHT = "erase cpo mir ofs arr mov rot scl str trm ext brk brk2 brk3 chm fil exp".split(" ");
const VRIGHT2 = "ord1 ord2 ord3 ord4".split(" ");

const Caret: React.FC<{ d: "up" | "down" | "left" | "right"; c?: string }> = ({ d, c = "#666" }) => {
  const p = { up: "M1 6l4-4 4 4", down: "M1 2l4 4 4-4", left: "M6 1L2 5l4 4", right: "M3 1l4 4-4 4" }[d];
  return (
    <Svg width="10" height="10" viewBox="0 0 10 10">
      <path d={p} stroke={c} strokeWidth="2" fill="none" />
    </Svg>
  );
};

const NavGlyph: React.FC<{ k: number }> = ({ k }) => {
  const d = ["M3 1v10M11 1L5 6l6 5z", "M9 1L3 6l6 5z", "M4 1l6 5-6 5z", "M11 1v10M3 1l6 5-6 5z"][k];
  return (
    <Svg width="14" height="12" viewBox="0 0 14 12">
      <path d={d} stroke="#777" fill={k === 0 || k === 3 ? "none" : "#666"} strokeWidth="1.200" />
    </Svg>
  );
};

export default function App() {
  return (
    <>
      <Global />
      <Page>
        <TitleBar>
          <TitleText>天正建筑</TitleText>
          <ImeBar>
            <ImeEn>En</ImeEn>
            <span>·,</span>
            <span>半</span>
            <Svg width="30" height="26" viewBox="0 0 30 26">
              <path d="M9 1l6 3 6-3 8 6-4 6-3-2v14H8V11l-3 2-4-6z" fill="#d8d8d8" />
            </Svg>
          </ImeBar>
          <WinButtons>
            <Svg width="16" height="16" viewBox="0 0 16 16">
              <path d="M2 8h12" stroke="#888" />
            </Svg>
            <Svg width="16" height="16" viewBox="0 0 16 16">
              <path d="M3 5h8v9H3zM5 5V2h8v9h-2" stroke="#888" fill="none" />
            </Svg>
            <Svg width="16" height="16" viewBox="0 0 16 16">
              <path d="M2 2l12 12M14 2L2 14" stroke="#888" />
            </Svg>
          </WinButtons>
        </TitleBar>

        <MenuBar>
          {MENU.map(([m, w]) => (
            <MenuItem key={m} $w={w}>{m}</MenuItem>
          ))}
          <MdiButtons>
            <MdiBtn $kind="min" />
            <MdiBtn />
            <MdiBtn $kind="cut" />
          </MdiButtons>
        </MenuBar>

        <ToolArea>
          <ToolRow>
            <Bar>
              <Strip items={ROW1} />
            </Bar>
            <Grip />
            <Bar>
              <Btn><Glyph n="txt" /></Btn>
              <Combo $w={118} $center $big>Standard<Chevron /></Combo>
              <Btn $ml={8}><Glyph n="dim" /></Btn>
              <Combo $w={116} $center $big>STANDARI<Chevron /></Combo>
              <Btn $ml={10}><Glyph n="tbl" /></Btn>
              <Combo $w={119} $big>Standard<Chevron /></Combo>
              <Btn $ml={11}><Glyph n="mls" /></Btn>
              <Combo $w={118} $center $big>Standard<Chevron /></Combo>
            </Bar>
          </ToolRow>

          <ToolRow>
            <Bar>
              <Combo $w={176}>AutoCAD 经典<Chevron /></Combo>
              <Btn><Glyph n="gear" /></Btn>
              <Btn><Glyph n="dc" /></Btn>
            </Bar>
            <Grip $w={9} />
            <Bar>
              <Btn><Glyph n="lns" /></Btn>
              <Combo $w={303}>
                <Glyph n="bulby" size={16} />
                <Glyph n="sun" size={16} />
                <Glyph n="snowd" size={16} />
                <Glyph n="lockb" size={17} />
                <Swatch />
                0
                <Chevron />
              </Combo>
              <Btn $ml={1}><Glyph n="lay2" /></Btn>
              <Btn><Glyph n="layp" /></Btn>
              <Btn><Glyph n="lns" /></Btn>
            </Bar>
            <Grip $w={13} />
            <Combo $w={147} $serif><Swatch />ByLayer<Chevron /></Combo>
            <Grip $w={7} />
            <Combo $w={160} $serif><LineSample $w={58} />ByLayer<Chevron /></Combo>
            <Grip $w={8} />
            <Combo $w={125} $serif><LineSample $w={38} />ByLayer<Chevron /></Combo>
            <Grip $w={6} />
            <Combo $w={120} $serif $dim>BYCOLOR<Chevron /></Combo>
          </ToolRow>

          <ToolRow>
            <Bar><Strip items={ROW3A} /></Bar>
            <Grip $w={9} />
            <Bar><Strip items={ROW3B} /></Bar>
            <Grip $w={9} />
            <Bar><Strip items={ROW3C} /></Bar>
            <Grip $w={8} />
            <Bar><Strip items={ROW3D} /></Bar>
          </ToolRow>

          <ToolRow>
            <Bar><Strip items={ROW4} /></Bar>
          </ToolRow>
        </ToolArea>

        <Body>
          <LeftDock>
            <DockHead>天正建筑</DockHead>
            <MenuBox>
              {DOCK.map((g, gi) => (
                <React.Fragment key={gi}>
                  {gi > 0 && <GroupLine $gap={gi === 1 ? 1 : 3} />}
                  {g.map((r) => (
                    <Row key={r.t}>
                      {r.tri && <Tri $open={r.open} />}
                      {r.icon && (
                        <RowIcon>
                          <Glyph n={r.icon} size={15} />
                        </RowIcon>
                      )}
                      {r.fit ? <RowLabel>{r.t}</RowLabel> : r.t}
                    </Row>
                  ))}
                </React.Fragment>
              ))}
            </MenuBox>
            <RepairHead>图形修复管...</RepairHead>
            <RepairBody>
              <InfoLine>
                <InfoIcon>i</InfoIcon>
                <RepairLink>了解图形修复</RepairLink>
              </InfoLine>
              <SectionHead>
                备份文件
                <DownMark $up />
              </SectionHead>
              <TreeBox>
                <PlusBox>+</PlusBox>
                <Glyph n="open" size={16} />
                <span>08-04-1#2#楼</span>
              </TreeBox>
              <SectionHead $mt={13}>
                详细信息
                <DownMark />
              </SectionHead>
              <SectionHead $mt={13}>
                预览
                <DownMark />
              </SectionHead>
            </RepairBody>
          </LeftDock>

          <Work>
            <DrawRow>
              <DrawGutter>
                <VBar $w={23}>
                  <VGrip />
                  {VLEFT.map((n, i) => (
                    <VBtn key={i} $h={22.200}>
                      <Glyph n={n} size={17} />
                    </VBtn>
                  ))}
                </VBar>
              </DrawGutter>
              <CanvasFrame>
                <Cad />
                <VScroll>
                  <VThumb />
                  <Caret d="up" />
                  <Caret d="down" />
                </VScroll>
                <TabRow>
                  {[0, 1, 2, 3].map((k) => (
                    <NavBtn key={k}>
                      <NavGlyph k={k} />
                    </NavBtn>
                  ))}
                  <Tab $on $w={54} $ml={1}>模型</Tab>
                  <Tab $w={50} $ml={1}>布局1</Tab>
                  <Tab $w={50} $ml={7}>布局2</Tab>
                  <TabEnd>
                    <Caret d="right" />
                  </TabEnd>
                </TabRow>
              </CanvasFrame>
              <RightRail>
                <VBar $w={18}>
                  <VGrip />
                  {VRIGHT.map((n, i) => (
                    <VBtn key={i} $h={22.200}>
                      <Glyph n={n} size={17} />
                    </VBtn>
                  ))}
                </VBar>
                <VBar $w={18} $mt={1}>
                  <VGrip />
                  {VRIGHT2.map((n, i) => (
                    <VBtn key={i} $h={22}>
                      <Glyph n={n} size={17} />
                    </VBtn>
                  ))}
                </VBar>
              </RightRail>
            </DrawRow>
            <CmdRow>
              <CmdGrip />
              <CmdBody>
                <CmdHistory>
                  <span>命令: *取消*</span>
                  <CmdVScroll>
                    <Caret d="up" />
                    <Caret d="down" />
                  </CmdVScroll>
                </CmdHistory>
                <CmdInput>
                  命令:
                  <HScroll>
                    <Caret d="left" />
                    <HThumb />
                    <Caret d="right" />
                  </HScroll>
                </CmdInput>
              </CmdBody>
            </CmdRow>
          </Work>
        </Body>

        <StatusBar>按住拾取键并拖动进行平移。</StatusBar>

        <Taskbar>
          <StartBtn>
            <Svg width="21" height="21" viewBox="0 0 21 21">
              <path d="M0 3l9-1.300V10H0zM10.500 1.500L21 0v10H10.500zM0 11.500h9v8L0 18zM10.500 11.500H21V21l-10.500-1.500z" fill="#0d0d0d" />
            </Svg>
          </StartBtn>
          <SearchBox>
            <Svg width="22" height="22" viewBox="0 0 22 22">
              <circle cx="13" cy="9" r="7" fill="none" stroke="#333" strokeWidth="1.800" />
              <path d="M8 14l-7 7" stroke="#333" strokeWidth="2" />
            </Svg>
            在这里输入你要搜索的内容
          </SearchBox>
          <TaskBtn>
            <Svg width="20" height="20" viewBox="0 0 20 20">
              <circle cx="10" cy="10" r="7.500" fill="none" stroke="#111" strokeWidth="3" />
            </Svg>
          </TaskBtn>
          <TaskBtn>
            <Svg width="22" height="24" viewBox="0 0 22 24">
              <path d="M1 1h13M1 23h13M3 5h9v14H3zM19 1v6M19 11v2M19 17v6" stroke="#333" strokeWidth="1.600" fill="none" />
            </Svg>
          </TaskBtn>
          <TaskBtn $line>
            <Svg width="30" height="34" viewBox="0 0 30 34">
              <rect x="0" y="1" width="30" height="33" rx="6" fill="#f08a1d" />
              <circle cx="15" cy="17" r="8.500" fill="#fff" />
              {[0, 45, 90, 135, 180, 225, 270, 315].map((a) => (
                <circle key={a} cx={15 + 11 * Math.cos((a * Math.PI) / 180)} cy={17 + 11 * Math.sin((a * Math.PI) / 180)} r="2.200" fill="#ffe6c8" />
              ))}
              <path d="M12 12l8 5-8 5z" fill="#f08a1d" />
            </Svg>
          </TaskBtn>
          <TaskBtn $line>
            <Svg width="30" height="32" viewBox="0 0 30 32">
              <path d="M2 22L11 3l15 2 2 25-14-2z" fill="#a9d2dc" />
              <path d="M24 4l4 1 2 25-4 1z" fill="#8a8a80" />
              <path d="M2 22l12 6 12 3-14-1z" fill="#7fa8b4" />
            </Svg>
          </TaskBtn>
          <TaskBtn $line>
            <Svg width="26" height="28" viewBox="0 0 26 28">
              <path d="M5 14h19a10.500 10.500 0 1 0-4 10" stroke="#0b78d4" strokeWidth="4.500" fill="none" />
            </Svg>
          </TaskBtn>
          <TaskBtn $line>
            <Svg width="28" height="32" viewBox="0 0 28 32">
              <rect y="1" width="28" height="31" rx="4" fill="#2d8cf0" />
              <path d="M6 11h16l-3 11-3-7-2 0-3 7z" fill="none" stroke="#fff" strokeWidth="2.400" />
            </Svg>
          </TaskBtn>
          <TaskBtn $line>
            <Svg width="30" height="28" viewBox="0 0 30 28">
              <path d="M1 2h11l3 3h14v21H1z" fill="#f5cc5c" />
              <path d="M1 2h11l3 3H1z" fill="#dba030" />
              <path d="M9 27V17h12v10h-4v-6h-4v6z" fill="#1f78c8" />
            </Svg>
          </TaskBtn>
          <TaskBtn $on $line>
            <Svg width="30" height="34" viewBox="0 0 30 34">
              <path d="M4 30h24" stroke="#bbb" strokeWidth="2" />
              <path d="M2 27L11 2h5l5 25h-5l-1-6-5 1-2 5z" fill="#c8302a" />
              <path d="M11 2h5l5 25h-5z" fill="#e0605a" />
              <text x="22" y="14" fontSize="6" fontFamily="Liberation Sans" fill="#b55">20</text>
              <text x="22" y="21" fontSize="6" fontFamily="Liberation Sans" fill="#b55">10</text>
            </Svg>
          </TaskBtn>
          <TaskBtn $line>
            <Svg width="32" height="32" viewBox="0 0 32 32">
              <circle cx="16" cy="16" r="15.500" fill="#bbb" />
              <circle cx="16" cy="16" r="14" fill="#111" />
              <circle cx="16" cy="16" r="9" fill="#f03a20" />
            </Svg>
          </TaskBtn>

          <Tray>
            <TrayItem $w={80}>
              <TrayText>54℃<br />CPU温度</TrayText>
            </TrayItem>
            <TrayItem $w={20}>
              <Svg width="16" height="24" viewBox="0 0 16 24">
                <path d="M3 1v7M13 1v7M1 8h14v5a5 5 0 0 1-5 5H6a5 5 0 0 1-5-5zM8 18v6" stroke="#fff" strokeWidth="2" fill="#e9eef2" />
                <path d="M1 8h14v5a5 5 0 0 1-5 5H6a5 5 0 0 1-5-5z" stroke="#aab" fill="none" />
              </Svg>
            </TrayItem>
            <TrayItem $w={50}>
              <Battery>
                100%
                <RedDot />
              </Battery>
            </TrayItem>
            <TrayItem $w={30}>
              <Svg width="18" height="11" viewBox="0 0 18 11">
                <path d="M1 10l8-8 8 8" stroke="#333" strokeWidth="1.600" fill="none" />
              </Svg>
            </TrayItem>
            <TrayItem $w={29}>
              <Svg width="14" height="24" viewBox="0 0 14 24">
                <rect x="3" y="1" width="8" height="14" rx="4" fill="#222" />
                <path d="M1 11a6 6 0 0 0 12 0M7 17v5M3 23h8" stroke="#222" strokeWidth="1.500" fill="none" />
              </Svg>
            </TrayItem>
            <TrayItem $w={29}>
              <Svg width="18" height="24" viewBox="0 0 18 24">
                <ellipse cx="9" cy="8" rx="6.500" ry="7.500" fill="#222" />
                <ellipse cx="9" cy="16" rx="7" ry="6" fill="#f4f4f4" />
                <path d="M3 12h12l-1 3H4z" fill="#d33" />
                <ellipse cx="9" cy="22" rx="6" ry="2" fill="#e8a020" />
                <path d="M7 8h4l-2 2z" fill="#e8a020" />
              </Svg>
            </TrayItem>
            <TrayItem $w={34}>
              <Svg width="22" height="14" viewBox="0 0 22 14">
                <rect x="5" y="3" width="15" height="10" fill="none" stroke="#222" strokeWidth="1.500" />
                <rect x="7" y="5" width="11" height="6" fill="#444" />
                <path d="M0 1h6v4H0z" fill="#222" />
                <path d="M20 6h2v4h-2z" fill="#222" />
              </Svg>
            </TrayItem>
            <TrayItem $w={30}>
              <Svg width="20" height="18" viewBox="0 0 20 18">
                <path d="M1 13A12 12 0 0 1 15 2M5 15a8 8 0 0 1 10-8M9 16a4 4 0 0 1 6-5" stroke="#99a" fill="none" />
                <circle cx="14" cy="15" r="1.800" fill="#333" />
              </Svg>
            </TrayItem>
            <TrayItem $w={24}>
              <Svg width="22" height="18" viewBox="0 0 22 18">
                <path d="M1 6h4l5-4v14l-5-4H1z" fill="none" stroke="#333" strokeWidth="1.200" />
                <path d="M13 6c1 2 1 4 0 6" stroke="#333" fill="none" />
                <path d="M16 3c2 4 2 8 0 12" stroke="#aab" fill="none" />
                <path d="M19 1c3 5 3 11 0 16" stroke="#ccd" fill="none" />
              </Svg>
            </TrayItem>
            <TrayItem $w={104}>
              <TrayText>0:11<br />2020/9/20</TrayText>
            </TrayItem>
            <TrayItem $w={40}>
              <NotifyIcon width="22" height="20" viewBox="0 0 22 20">
                <path d="M0 0h22v15H10l-4 5v-5H0z" fill="#111" />
                <path d="M4 4h14M4 7.500h14M4 11h9" stroke="#ccc" strokeWidth="1.200" />
              </NotifyIcon>
              <NotifyBadge>3</NotifyBadge>
            </TrayItem>
          </Tray>
        </Taskbar>

        <AppButton>
          <Svg width="33" height="37" viewBox="0 0 33 37">
            <path d="M-3 32L8 5h6l8 27h-7l-1-6-8 1-2 5z" fill="#c8201a" />
            <path d="M10 5h4l8 27h-7z" fill="#e8433a" />
            <path d="M24 17h7l-3.500 4z" fill="#444" />
          </Svg>
        </AppButton>

        <RecBar>
          <RecLead />
          <Svg width="16" height="14" viewBox="0 0 16 14">
            <path d="M1 1h14M1 7h14M1 13h14" stroke="#99a" strokeWidth="1.300" />
          </Svg>
          <RecPin>
            <Svg width="12" height="20" viewBox="0 0 12 20">
              <path d="M3 1h6v7l2 3H1l2-3zM6 11v8" fill="#2a6fc0" stroke="#2a6fc0" strokeWidth="1.500" />
            </Svg>
          </RecPin>
          <RecSize>1920x1080</RecSize>
          <RecTime>正在录制 [00:01:49]</RecTime>
          <RecTool $w={36}>
            <Svg width="12" height="16" viewBox="0 0 12 16">
              <path d="M1 0h3.500v16H1zM7.500 0H11v16H7.500z" fill="#d9301e" />
            </Svg>
          </RecTool>
          <RecTool $w={36}>
            <Svg width="17" height="17" viewBox="0 0 17 17">
              <rect width="17" height="17" fill="#d9301e" />
            </Svg>
          </RecTool>
          <RecTool $w={39}>
            <Svg width="20" height="18" viewBox="0 0 20 18">
              <path d="M1 4h5l2-3h5l2 3h4v13H1z" fill="#d5d7d7" />
              <circle cx="10" cy="10" r="4" fill="#1f262a" />
              <circle cx="10" cy="10" r="2" fill="#d5d7d7" />
            </Svg>
          </RecTool>
          <RecTool $w={36}>
            <Svg width="18" height="18" viewBox="0 0 18 18">
              <path d="M1 17l2-6L12 2l4 4-9 9z" fill="#e0e2e2" />
            </Svg>
          </RecTool>
          <RecTool $w={42}>
            <Svg width="14" height="14" viewBox="0 0 14 14">
              <path d="M1 1l12 12M13 1L1 13" stroke="#778" strokeWidth="1.400" />
            </Svg>
          </RecTool>
        </RecBar>

        <SogouBox>
          <Svg width="24" height="24" viewBox="0 0 24 24">
            <path d="M5 3l16-1 1 17-18 3z" fill="#f0682a" />
            <path d="M17 7H9L8 12h8l-1 5H6" stroke="#fff" strokeWidth="2.600" fill="none" />
          </Svg>
          <span>3</span>
        </SogouBox>

        <Caption>需要画的时候就是直接</Caption>
      </Page>
    </>
  );
}
